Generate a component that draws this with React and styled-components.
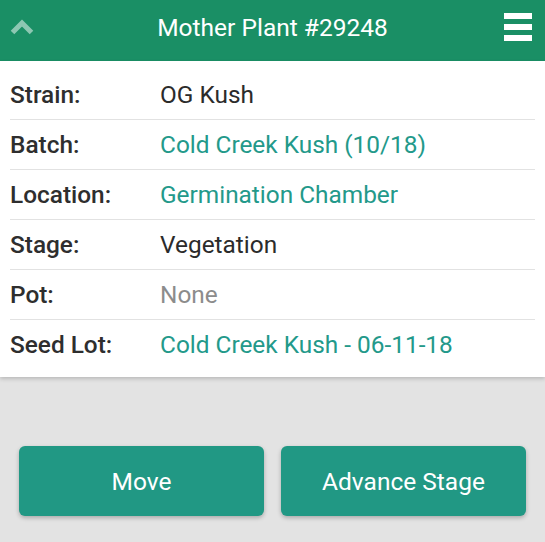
import React from 'react';
import styled, { createGlobalStyle } from 'styled-components';

const GlobalStyle = createGlobalStyle`
  html, body {
    margin: 0;
    padding: 0;
    background: #e3e3e3;
    font-family: Roboto, "Liberation Sans", sans-serif;
  }
`;

const Page = styled.div`
  width: 545px;
  min-height: 542px;
  background: #e3e3e3;
  display: flex;
  flex-direction: column;
`;

const Header = styled.header`
  height: 61px;
  background: #1a8f65;
  display: grid;
  grid-template-columns: 50px 1fr 50px;
  align-items: center;
  color: #fff;
`;

const Title = styled.h1`
  margin: 0;
  font-size: 24.5px;
  font-weight: 400;
  text-align: center;
  padding-bottom: 6px;
`;

const IconButton = styled.div`
  display: flex;
  align-items: center;
  justify-content: ${props => (props.right ? 'flex-end' : 'flex-start')};
  padding: ${props => (props.right ? '0 13px 0 0' : '0 0 0 10px')};
  height: 100%;
  padding-bottom: 8px;
  box-sizing: border-box;
`;

const Card = styled.section`
  background: #fff;
  padding: 8px 10px 8px 10px;
  box-shadow: 0 2px 4px rgba(0, 0, 0, 0.18);
`;

const Row = styled.div`
  display: flex;
  align-items: center;
  height: 50px;
  font-size: 24.4px;
  border-top: ${props => (props.first ? 'none' : '1px solid #e2e2e2')};
  box-sizing: border-box;
`;

const Label = styled.span`
  width: 150px;
  color: #2e2e2e;
  font-weight: 500;
`;

const Value = styled.span`
  color: ${props =>
    props.kind === 'link' ? '#23998a' : props.kind === 'muted' ? '#8c8c8c' : '#2b2b2b'};
`;

const Actions = styled.div`
  display: flex;
  gap: 17px;
  padding: 69px 19px 0 19px;
`;

const Button = styled.button`
  flex: 1;
  height: 70px;
  border: none;
  border-radius: 6px;
  background: #219884;
  color: #fff;
  font-family: inherit;
  font-size: 24.5px;
  box-shadow: 0 2px 4px rgba(0, 0, 0, 0.25);
  padding: 0;
`;

const ChevronUp = () => (
  <svg width="24" height="16" viewBox="0 0 24 16">
    <path d="M2.5 13.5 L12 4 L21.5 13.5" fill="none" stroke="rgba(255,255,255,0.5)" strokeWidth="5" />
  </svg>
);

const Bars = () => (
  <svg width="28" height="28" viewBox="0 0 28 28">
    <rect x="0" y="0" width="28" height="6" fill="#fff" />
    <rect x="0" y="11" width="28" height="6" fill="#fff" />
    <rect x="0" y="22" width="28" height="6" fill="#fff" />
  </svg>
);

const details = [
  { label: 'Strain:', value: 'OG Kush' },
  { label: 'Batch:', value: 'Cold Creek Kush (10/18)', kind: 'link' },
  { label: 'Location:', value: 'Germination Chamber', kind: 'link' },
  { label: 'Stage:', value: 'Vegetation' },
  { label: 'Pot:', value: 'None', kind: 'muted' },
  { label: 'Seed Lot:', value: 'Cold Creek Kush - 06-11-18', kind: 'link' },
];

const App = () => (
  <Page>
    <GlobalStyle />
    <Header>
      <IconButton>
        <ChevronUp />
      </IconButton>
      <Title>Mother Plant #29248</Title>
      <IconButton right>
        <Bars />
      </IconButton>
    </Header>
    <Card>
      {details.map((d, i) => (
        <Row key={d.label} first={i === 0}>
          <Label>{d.label}</Label>
          <Value kind={d.kind}>{d.value}</Value>
        </Row>
      ))}
    </Card>
    <Actions>
      <Button>Move</Button>
      <Button>Advance Stage</Button>
    </Actions>
  </Page>
);

export default App;
